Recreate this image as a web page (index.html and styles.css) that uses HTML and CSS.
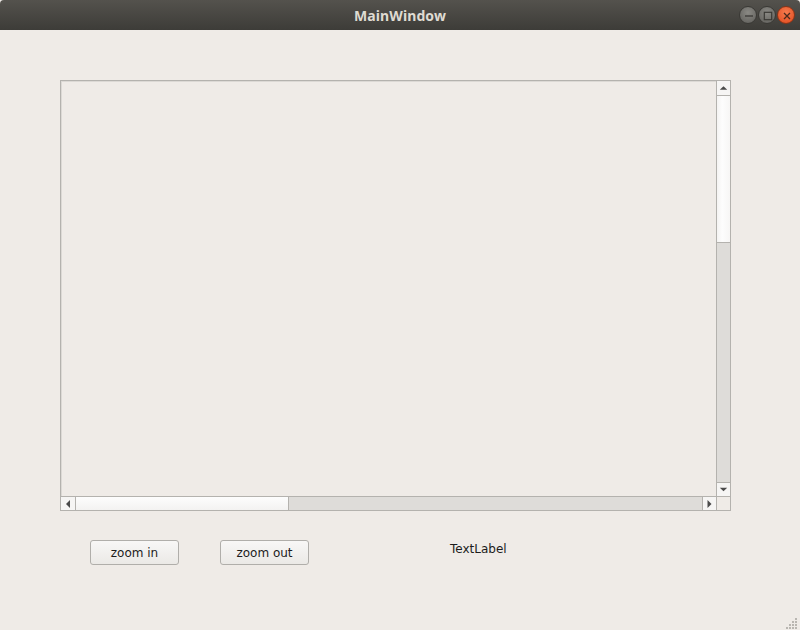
FILE: index.html
```html
<!DOCTYPE html>
<html>
<head>
<meta charset="utf-8">
<link rel="stylesheet" href="styles.css">
</head>
<body>
<div class="window">
  <div class="titlebar">
    <span class="title">MainWindow</span>
    <div class="controls">
      <span class="ctl ctl-min"><svg width="18" height="18" viewBox="0 0 18 18"><line x1="5" y1="9" x2="13" y2="9" stroke="#3a3935" stroke-width="1.3"/></svg></span>
      <span class="ctl ctl-max"><svg width="18" height="18" viewBox="0 0 18 18"><rect x="5.3" y="5.3" width="7.4" height="7.4" fill="none" stroke="#3a3935" stroke-width="1.2"/></svg></span>
      <span class="ctl ctl-close"><svg width="18" height="18" viewBox="0 0 18 18"><path d="M6 6 L12 12 M12 6 L6 12" stroke="#4a2a1c" stroke-width="1.3"/></svg></span>
    </div>
  </div>
  <div class="content">
    <div class="scrollarea">
      <div class="viewport"></div>
      <div class="vscroll">
        <div class="sb-btn sb-up"><svg width="14" height="14" viewBox="0 0 14 14"><path d="M3 9 L7 5 L11 9 Z" fill="#4a4a4a"/></svg></div>
        <div class="v-handle"></div>
        <div class="v-trough"></div>
        <div class="sb-btn sb-down"><svg width="14" height="13" viewBox="0 0 14 13"><path d="M3 4.5 L7 8.5 L11 4.5 Z" fill="#4a4a4a"/></svg></div>
      </div>
      <div class="hscroll">
        <div class="sb-btn sb-left"><svg width="14" height="14" viewBox="0 0 14 14"><path d="M9 3 L5 7 L9 11 Z" fill="#4a4a4a"/></svg></div>
        <div class="h-handle"></div>
        <div class="h-trough"></div>
        <div class="sb-btn sb-right"><svg width="13" height="14" viewBox="0 0 13 14"><path d="M4.5 3 L8.5 7 L4.5 11 Z" fill="#4a4a4a"/></svg></div>
      </div>
      <div class="corner"></div>
    </div>
    <div class="bottom-row">
      <button class="btn">zoom in</button>
      <button class="btn btn-out">zoom out</button>
      <span class="label">TextLabel</span>
    </div>
  </div>
  <svg class="grip" width="12" height="12" viewBox="0 0 12 12">
    <g fill="#b9b6b1">
      <rect x="9" y="1" width="2" height="2"/>
      <rect x="6" y="4" width="2" height="2"/><rect x="9" y="4" width="2" height="2"/>
      <rect x="3" y="7" width="2" height="2"/><rect x="6" y="7" width="2" height="2"/><rect x="9" y="7" width="2" height="2"/>
      <rect x="0" y="10" width="2" height="2"/><rect x="3" y="10" width="2" height="2"/><rect x="6" y="10" width="2" height="2"/><rect x="9" y="10" width="2" height="2"/>
    </g>
  </svg>
</div>
</body>
</html>
```

FILE: styles.css
```css
html, body {
  margin: 0;
  padding: 0;
  background: #efebe7;
}
.window {
  position: relative;
  width: 800px;
  height: 630px;
  background: #efebe7;
  font-family: "DejaVu Sans", "Noto Sans", sans-serif;
  overflow: hidden;
}
.titlebar {
  position: relative;
  height: 30px;
  background: linear-gradient(#54524d, #3d3c38);
  border-radius: 4px 4px 0 0;
  display: flex;
  align-items: center;
  justify-content: center;
}
.title {
  color: #dfdbd2;
  font-family: "Noto Sans", "DejaVu Sans", sans-serif;
  font-weight: bold;
  font-size: 14px;
  letter-spacing: 0.1px;
}
.controls {
  position: absolute;
  right: 5px;
  top: 6px;
  display: flex;
  gap: 1px;
}
.ctl {
  width: 18px;
  height: 18px;
  border-radius: 50%;
  display: block;
  box-sizing: border-box;
}
.ctl svg { display: block; margin: -0.5px; }
.ctl-min, .ctl-max {
  background: radial-gradient(circle at 50% 35%, #8a8984, #5e5d59);
  border: 0.5px solid #3a3935;
}
.ctl-close {
  background: radial-gradient(circle at 50% 35%, #f57b4e, #e0491d);
  border: 0.5px solid #8a3417;
}
.content {
  padding: 50px 0 0 60px;
}
.scrollarea {
  width: 671px;
  height: 431px;
  box-sizing: border-box;
  border: 1px solid #b4b2ae;
  display: grid;
  grid-template-columns: 1fr 14px;
  grid-template-rows: 1fr 14px;
  background: #efebe7;
}
.viewport {
  background: #efebe7;
  box-shadow: inset 1px 1px 0 #dcd9d5;
}
.vscroll {
  border-left: 1px solid #b4b2ae;
  display: flex;
  flex-direction: column;
  background: #dedcd9;
}
.hscroll {
  border-top: 1px solid #b4b2ae;
  display: flex;
  flex-direction: row;
  background: #dedcd9;
}
.corner {
  border-top: 1px solid #b4b2ae;
  border-left: 1px solid #b4b2ae;
  background: #efebe7;
}
.sb-btn {
  background: #f6f5f4;
  display: flex;
  align-items: center;
  justify-content: center;
  flex: none;
}
.sb-btn svg { display: block; }
.sb-up { height: 14px; border-bottom: 1px solid #b4b2ae; }
.sb-down { height: 13px; border-top: 1px solid #b4b2ae; }
.sb-left { width: 14px; border-right: 1px solid #b4b2ae; }
.sb-right { width: 13px; border-left: 1px solid #b4b2ae; }
.v-handle {
  height: 146px;
  flex: none;
  background: linear-gradient(90deg, #f4f3f2, #fdfdfd 40%, #f7f6f5);
  border-bottom: 1px solid #b4b2ae;
}
.v-trough {
  flex: 1;
  background: #dedcd9;
}
.h-handle {
  width: 212px;
  flex: none;
  background: linear-gradient(#fdfdfd, #f3f2f1);
  border-right: 1px solid #b4b2ae;
}
.h-trough {
  flex: 1;
  background: #dedcd9;
}
.bottom-row {
  margin-top: 29px;
  padding-left: 30px;
  display: flex;
  align-items: center;
  height: 25px;
}
.btn {
  width: 89px;
  height: 25px;
  box-sizing: border-box;
  border: 1px solid #b0aeaa;
  border-radius: 3px;
  background: linear-gradient(#f8f7f6, #ebe9e6);
  font-family: "DejaVu Sans", "Noto Sans", sans-serif;
  font-size: 12px;
  color: #1c1c1c;
  padding: 0;
  margin: 0;
}
.btn-out {
  margin-left: 41px;
}
.label {
  margin-left: 141px;
  font-size: 12px;
  color: #1c1c1c;
  position: relative;
  top: -4px;
}
.grip {
  position: absolute;
  right: 2px;
  bottom: 1px;
}
```
